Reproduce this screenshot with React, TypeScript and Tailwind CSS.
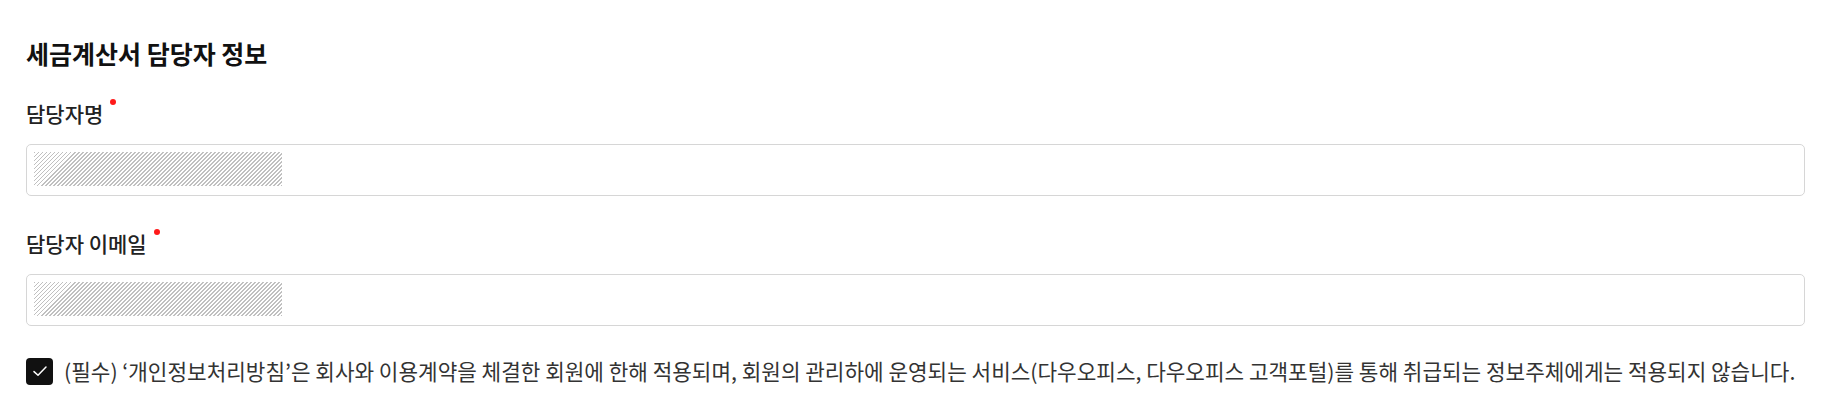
import React from 'react';

const hatch =
    'bg-[repeating-linear-gradient(135deg,#c0c0c0_0px,#c0c0c0_1.4px,#ffffff_1.4px,#ffffff_2.83px)]';

const Field: React.FC<{ label: string }> = ({ label }) => (
    <div>
        <div className="flex items-start h-[28px]">
            <span className="text-[21px] leading-[28px] font-medium text-[#222]">{label}</span>
            <span className="ml-[7px] mt-[0px] w-[6px] h-[6px] rounded-full bg-[#ff1a1a]" />
        </div>
        <div className="mt-[17px] h-[52px] border border-[#d6d6d6] rounded-[5px] bg-white flex items-center pl-[7px]">
            <div className={`w-[248px] h-[34px] -mt-[2px] ${hatch}`} />
        </div>
    </div>
);

export default function App() {
    return (
        <div
            className="bg-white w-[1848px] h-[410px] pl-[26px] pr-[43px] pt-[37px]"
            style={{ fontFamily: '"Noto Sans CJK KR", "Noto Sans", sans-serif' }}
        >
            <h2 className="text-[25px] leading-[32px] font-bold text-[#111]">세금계산서 담당자 정보</h2>

            <div className="mt-[30px] space-y-[33px]">
                <Field label="담당자명" />
                <Field label="담당자 이메일" />
            </div>

            {/* Consent */}
            <div className="mt-[31px] flex items-center">
                <span className="w-[27px] h-[27px] rounded-[4px] bg-[#111] flex items-center justify-center shrink-0">
                    <svg width="16" height="16" viewBox="0 0 16 16" fill="none">
                        <path d="M2 8.6 6 12.2 14 4" stroke="#fff" strokeWidth="1.5" strokeLinecap="round" strokeLinejoin="round" />
                    </svg>
                </span>
                <p className="ml-[11px] text-[21.3px] leading-[28px] text-[#333] whitespace-nowrap">
                    (필수) ‘개인정보처리방침’은 회사와 이용계약을 체결한 회원에 한해 적용되며, 회원의 관리하에 운영되는 서비스(다우오피스, 다우오피스 고객포털)를 통해 취급되는 정보주체에게는 적용되지 않습니다.
                </p>
            </div>
        </div>
    );
}
